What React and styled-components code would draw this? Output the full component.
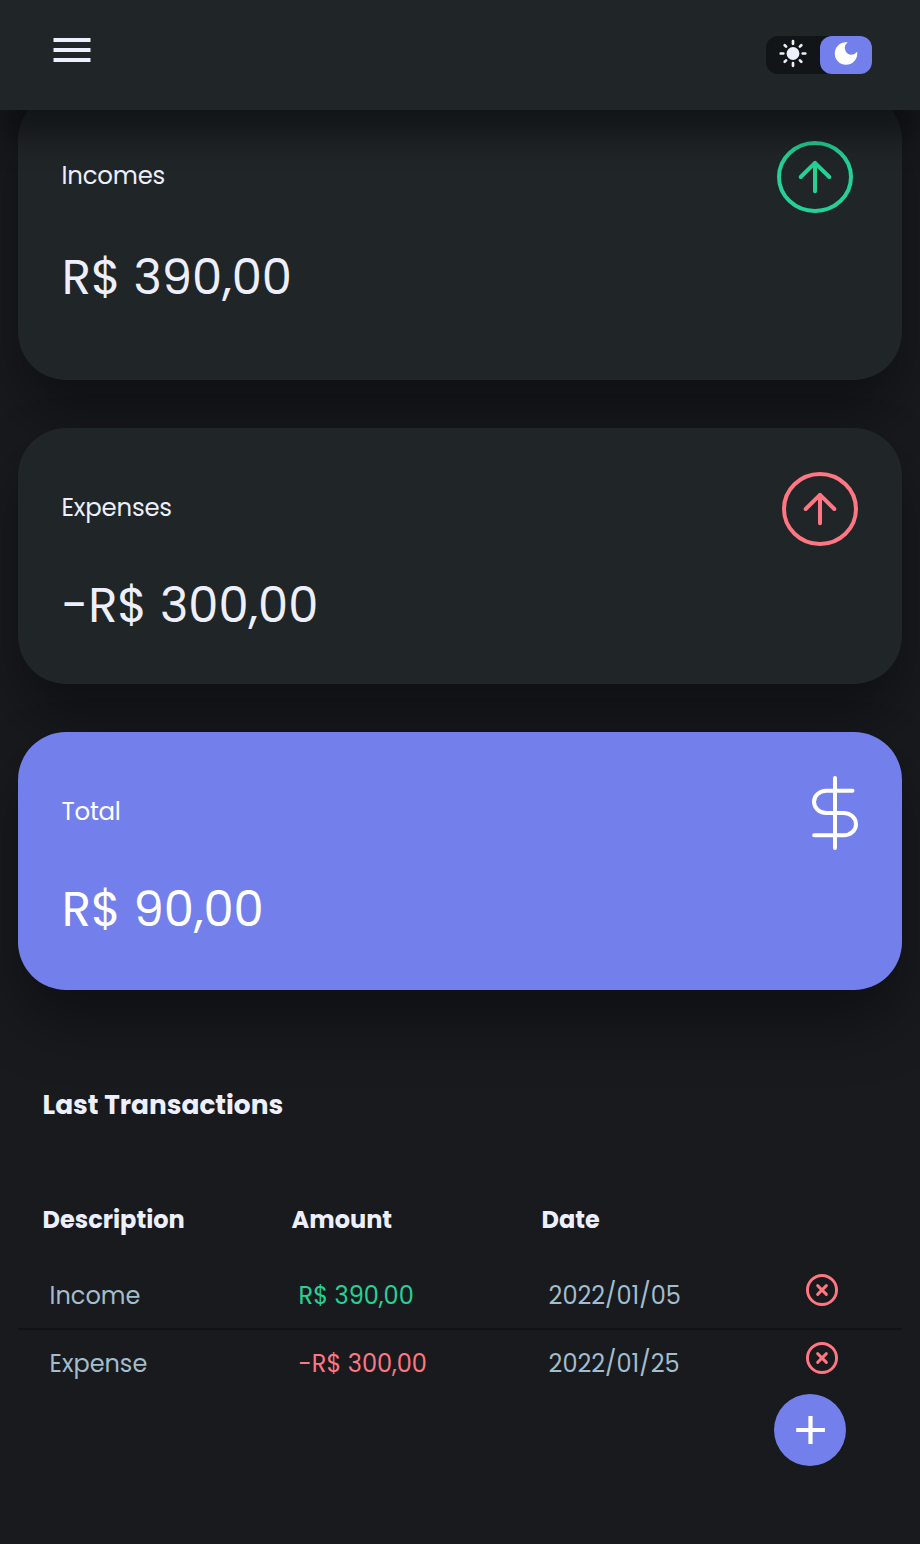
import React from "react";
import styled, { createGlobalStyle } from "styled-components";
import { MdDarkMode } from "react-icons/md";
import { FiXCircle } from "react-icons/fi";

const GlobalStyle = createGlobalStyle`
  * { box-sizing: border-box; margin: 0; padding: 0; }
  body {
    background: #181a1e;
    color: #edeffd;
    font-family: Poppins, Inter, sans-serif;
  }
  button { border: 0; background: none; color: inherit; font: inherit; cursor: pointer; }
`;

const Page = styled.div`
  height: 1544px;
  display: flex;
  flex-direction: column;
  overflow: hidden;
`;

const Header = styled.header`
  position: relative;
  z-index: 2;
  flex: none;
  height: 110px;
  padding: 36px 48px 0 53px;
  display: flex;
  justify-content: space-between;
  align-items: flex-start;
  background: #202528;
  box-shadow: 0 28px 28px rgba(0, 0, 0, 0.4);
`;

const MenuButton = styled.button`
  display: flex;
  padding-top: 2px;
`;

const ThemeToggle = styled.div`
  display: flex;
  width: 106px;
  height: 38px;
  border-radius: 12px;
  background: #111517;
`;

const ToggleOption = styled.button`
  width: ${(p) => (p.$active ? 52 : 54)}px;
  height: 38px;
  padding-bottom: 4px;
  display: flex;
  align-items: center;
  justify-content: center;
  font-size: 30px;
  border-radius: 12px;
  color: ${(p) => (p.$active ? "#fff" : "#edeffd")};
  background: ${(p) => (p.$active ? "#7380ec" : "transparent")};
`;

const Cards = styled.section`
  flex: none;
  margin-top: -18px;
  padding: 0 18px;
  display: flex;
  flex-direction: column;
  gap: 48px;
`;

const Card = styled.article`
  height: ${(p) => p.$height}px;
  padding: ${(p) => p.$top}px 44px 0;
  border-radius: 48px;
  color: ${(p) => (p.$primary ? "#fff" : "#edeffd")};
  background: ${(p) => (p.$primary ? "#7380ec" : "#202528")};
  box-shadow: 0 32px 60px rgba(0, 0, 0, 0.4);
`;

const CardTop = styled.div`
  display: flex;
  justify-content: space-between;
  align-items: center;
  height: 74px;
  padding-right: ${(p) => p.$inset || 0}px;
`;

const Label = styled.h3`
  font-size: 24.4px;
  font-weight: 400;
  line-height: 34px;
  margin-top: -3px;
  margin-left: -0.5px;
  letter-spacing: -0.2px;
`;

const Value = styled.p`
  margin-top: ${(p) => p.$gap}px;
  margin-left: -0.3px;
  font-size: 48px;
  font-weight: 400;
  line-height: 60px;
  white-space: pre;
`;

const Transactions = styled.section`
  flex: none;
  margin-top: 95px;
  padding: 0 18px;
`;

const Title = styled.h2`
  padding-left: 24.6px;
  font-size: 26.4px;
  line-height: 40px;
  font-weight: 700;
`;

const Row = styled.div`
  display: grid;
  grid-template-columns: 249px 250px 250px 1fr;
  height: ${(p) => p.$height}px;
  padding-left: 31.6px;
  border-bottom: ${(p) => (p.$divided ? "2px solid #111214" : "0")};
`;

const HeadRow = styled(Row)`
  margin-top: 75px;
  padding-left: 24.6px;
`;

const HeadCell = styled.span`
  font-size: 24px;
  font-weight: 700;
  line-height: 40px;
`;

const tones = { plain: "#a3bdcc", up: "#25d195", down: "#ff7782" };

const Cell = styled.span`
  font-size: 24px;
  font-weight: 400;
  line-height: ${(p) => p.$line}px;
  white-space: pre;
  color: ${(p) => tones[p.$tone || "plain"]};
`;

const DeleteButton = styled.button`
  justify-self: start;
  align-self: start;
  display: flex;
  margin: ${(p) => p.$top}px 0 0 7.4px;
  font-size: 32px;
  color: #ff7782;
`;

const AddButton = styled.button`
  position: absolute;
  left: 774px;
  top: 1394px;
  width: 72px;
  height: 72px;
  border-radius: 50%;
  background: #7380ec;
  display: flex;
`;

const MenuIcon = () => (
  <svg width="38" height="24" viewBox="0 0 38 24" fill="#edeffd">
    <path d="M.5 0h37v4H.5zM.5 10h37v4H.5zM.5 20h37v4H.5z" />
  </svg>
);

const SunIcon = () => (
  <svg width="30" height="30" viewBox="-15 -15.5 30 30" stroke="currentColor" strokeWidth="2.7" strokeLinecap="round">
    <circle r="6.4" fill="currentColor" stroke="none" />
    <path d="M0-9.7V-12.3M0 9.7V12.3M-9.7 0H-12.3M9.7 0H12.3M6.9-6.9L8.3-8.3M-6.9-6.9L-8.3-8.3M6.9 6.9L8.3 8.3M-6.9 6.9L-8.3 8.3" />
  </svg>
);

const ArrowCircle = ({ color, ry }) => (
  <svg width="76" height="74" viewBox="-38 -37 76 74" fill="none" stroke={color} strokeWidth="4" strokeLinecap="round" strokeLinejoin="round">
    <ellipse rx="36" ry={ry} />
    <path d="M0 14.2V-14.2M-14.3 0L0-14.2L14.3 0" />
  </svg>
);

const DollarIcon = () => (
  <svg width="46" height="74" viewBox="0 0 46 74" fill="none" stroke="#fff" strokeWidth="4" strokeLinecap="round" strokeLinejoin="round">
    <path d="M23 2V72M40.5 14.7H14.25a12.25 11.15 0 0 0 0 22.3H31.75a12.25 11.15 0 0 1 0 22.3H2.2" />
  </svg>
);

const PlusIcon = () => (
  <svg width="72" height="72" viewBox="0 0 72 72" fill="#fff">
    <path d="M22.2 34h28.7v4H22.2zM34.4 22h4.2v28h-4.2z" />
  </svg>
);

const rows = [
  { name: "Income", amount: "R$ 390,00", tone: "up", date: "2022/01/05", height: 70, line: 72, top: 14, divided: true },
  { name: "Expense", amount: "-R$ 300,00", tone: "down", date: "2022/01/25", height: 68, line: 68, top: 12, divided: false },
];

export default function App() {
  return (
    <>
      <GlobalStyle />
      <Page>
        <Header>
          <MenuButton aria-label="Menu"><MenuIcon /></MenuButton>
          <ThemeToggle>
            <ToggleOption aria-label="Light theme"><SunIcon /></ToggleOption>
            <ToggleOption $active aria-label="Dark theme"><MdDarkMode viewBox="0 -0.4 24 24" /></ToggleOption>
          </ThemeToggle>
        </Header>

        <Cards>
          <Card $height={288} $top={48}>
            <CardTop $inset={5}>
              <Label>Incomes</Label>
              <ArrowCircle color="#25d195" ry={34} />
            </CardTop>
            <Value $gap={34}>R$ 390,00</Value>
          </Card>
          <Card $height={256} $top={44}>
            <CardTop>
              <Label>Expenses</Label>
              <ArrowCircle color="#ff7782" ry={35} />
            </CardTop>
            <Value $gap={30}>-R$ 300,00</Value>
          </Card>
          <Card $height={258} $top={44} $primary>
            <CardTop>
              <Label>Total</Label>
              <DollarIcon />
            </CardTop>
            <Value $gap={30}>R$ 90,00</Value>
          </Card>
        </Cards>

        <Transactions>
          <Title>Last Transactions</Title>
          <HeadRow $height={60}>
            <HeadCell>Description</HeadCell>
            <HeadCell>Amount</HeadCell>
            <HeadCell>Date</HeadCell>
          </HeadRow>
          {rows.map((r) => (
            <Row key={r.name} $height={r.height} $divided={r.divided}>
              <Cell $line={r.line}>{r.name}</Cell>
              <Cell $line={r.line} $tone={r.tone}>{r.amount}</Cell>
              <Cell $line={r.line}>{r.date}</Cell>
              <DeleteButton $top={r.top} aria-label={"Delete " + r.name}><FiXCircle viewBox="1 1 22 22" /></DeleteButton>
            </Row>
          ))}
        </Transactions>
        <AddButton aria-label="Add transaction"><PlusIcon /></AddButton>
      </Page>
    </>
  );
}
